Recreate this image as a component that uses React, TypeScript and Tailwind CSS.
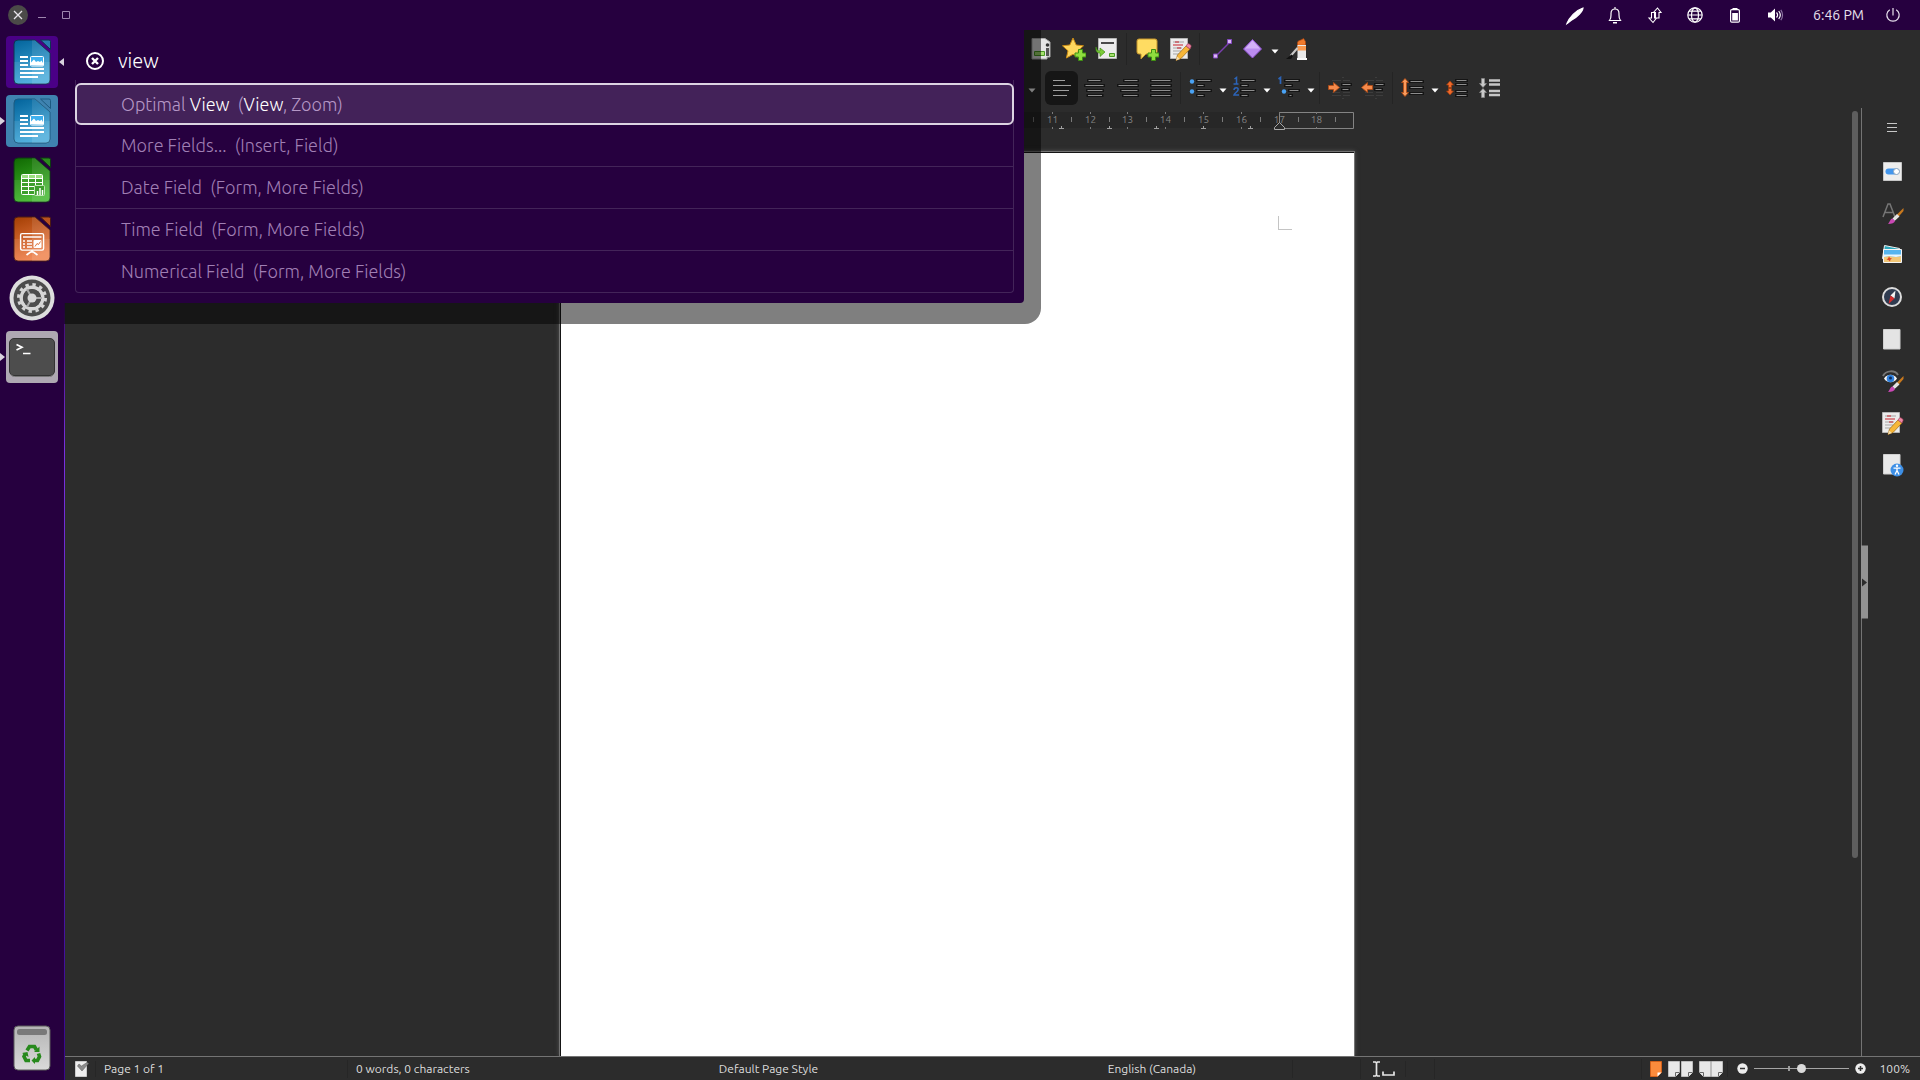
import { useState, type ReactNode } from "react";

type Part = { text: string; hit?: boolean };

const RESULTS: Part[][] = [
  [
    { text: "Optimal " },
    { text: "View", hit: true },
    { text: "  (" },
    { text: "View", hit: true },
    { text: ", Zoom)" },
  ],
  [{ text: "More Fields...  (Insert, Field)" }],
  [{ text: "Date Field  (Form, More Fields)" }],
  [{ text: "Time Field  (Form, More Fields)" }],
  [{ text: "Numerical Field  (Form, More Fields)" }],
];

export default function App() {
  return (
    <div className="flex h-screen flex-col overflow-hidden bg-[#2c2c2c] font-['Ubuntu','Noto_Sans',sans-serif] text-[#dcdcdc]">
      <TopPanel />
      <div className="flex min-h-0 flex-1">
        <Launcher />
        <div className="w-px shrink-0 bg-linear-to-b from-[#26003f] from-20% via-[#7a32e0] via-40% to-[#37078c]" />
        <main className="relative flex min-w-0 flex-1 flex-col">
          <StandardToolbar />
          <FormattingToolbar />
          <div className="flex min-h-0 flex-1">
            <Editor />
            <div className="w-3 shrink-0 pt-[3px]">
              <div className="ml-[3px] h-[79%] w-1.5 rounded-full bg-[#5e5e5e]" />
            </div>
            <Sidebar />
          </div>
          <StatusBar />
          <Hud />
        </main>
      </div>
    </div>
  );
}

/* ---------- top panel ---------- */

function TopPanel() {
  return (
    <header className="flex h-[30px] shrink-0 items-center bg-[#26003f] pl-2 pr-[15px]">
      <button type="button" aria-label="Close" className="flex size-5 items-center justify-center rounded-full bg-[#4b4a48]">
        <svg width="10" height="10" viewBox="0 0 10 10" stroke="#e8e4ea" strokeWidth="1.3">
          <path d="M1 1l8 8M9 1L1 9" />
        </svg>
      </button>
      <button type="button" aria-label="Minimize" className="flex h-5 w-7 items-center justify-center">
        <svg width="10" height="10" viewBox="0 0 10 10" stroke="#9d86ae">
          <path d="M1 7.5h8" />
        </svg>
      </button>
      <button type="button" aria-label="Maximize" className="flex h-5 w-5 items-center justify-center">
        <svg width="10" height="10" viewBox="0 0 10 10" fill="none" stroke="#9d86ae">
          <path d="M1.500 1.500h7v7h-7z" />
        </svg>
      </button>
      <div className="ml-auto flex items-center">
        <Indicator label="Writing">
          <path d="M4 20.500C6 15 13 7 20 5 20 8 14 14.500 8 17.500z" fill="#fff" />
          <path d="M4 20.500l4-4" />
        </Indicator>
        <Indicator label="Notifications">
          <path d="M6.500 17.500C8.500 15 8 13 8 10.500 8 7.500 9.600 6 12 6s4 1.500 4 4.500c0 2.500-.5 4.500 1.500 7zM12 4v2" />
          <path d="M10 19h4v1.500h-4z" fill="#fff" stroke="none" />
        </Indicator>
        <Indicator label="Network">
          <path d="M11.500 9.500H8.500V15H6l4 4.500 3.500-4.500H11.500zM12.500 15h3.500V9.500H18L14.500 5l-4 4.500h2z" strokeWidth="1.100" />
        </Indicator>
        <Indicator label="Keyboard language">
          <circle cx="12" cy="12" r="7.200" />
          <ellipse cx="12" cy="12" rx="3.500" ry="7.200" />
          <path d="M5 12h14M6 8.200h12M6 15.800h12" />
        </Indicator>
        <Indicator label="Battery">
          <path d="M9.500 5h5v2h-5z" fill="#fff" stroke="none" />
          <rect x="7.600" y="6.600" width="8.800" height="12.500" rx="1.200" />
          <path d="M9.200 10h5.700v7.500H9.200z" fill="#fff" stroke="none" />
        </Indicator>
        <Indicator label="Volume">
          <path d="M5 9.500h2.800L12 5.500v13l-4.200-4H5z" fill="#fff" stroke="none" />
          <path d="M13.500 9.500c1.300 1.500 1.300 3.500 0 5M15.700 8c2 2.500 2 5.500 0 8" />
          <path d="M17.800 6.800c2 3 2 7.400 0 10.400" stroke="#8a72a0" />
        </Indicator>
        <time className="ml-[18px] mr-[17px] text-[14px] text-[#e9e2ee]">6:46 PM</time>
        <button type="button" aria-label="Power" className="flex size-6 items-center justify-center">
          <svg width="24" height="24" viewBox="0 0 24 24" fill="none" stroke="#e9e2ee" strokeWidth="1.200">
            <path d="M8.800 6.700a6.200 6.200 0 1 0 6.400 0M12 5v7.500" />
          </svg>
        </button>
      </div>
    </header>
  );
}

function Indicator({ label, children }: { label: string; children: ReactNode }) {
  return (
    <button type="button" aria-label={label} className="flex h-6 w-10 items-center justify-center">
      <svg width="24" height="24" viewBox="0 0 24 24" fill="none" stroke="#fff" strokeWidth="1.200">
        {children}
      </svg>
    </button>
  );
}

/* ---------- launcher ---------- */

function Launcher() {
  return (
    <nav className="flex w-16 shrink-0 flex-col items-center gap-[7px] bg-[#26003f] pb-1.5 pt-1.5">
      <Tile label="LibreOffice Search" className="bg-[#4a0086]">
        <WriterIcon />
        <span className="absolute left-[53px] top-[22px] z-10 border-y-4 border-r-[5px] border-y-transparent border-r-[#d9d2de]" />
      </Tile>
      <Tile label="LibreOffice Writer" className="bg-[#3f83b0]">
        <RunningMark />
        <WriterIcon flat />
      </Tile>
      <Tile label="LibreOffice Calc">
        <CalcIcon />
      </Tile>
      <Tile label="LibreOffice Impress">
        <ImpressIcon />
      </Tile>
      <Tile label="System Settings">
        <GearIcon />
      </Tile>
      <Tile label="Terminal" className="bg-[#aea8b2]">
        <RunningMark />
        <TerminalIcon />
      </Tile>
      <div className="mt-auto">
        <Tile label="Trash">
          <TrashIcon />
        </Tile>
      </div>
    </nav>
  );
}

function Tile({ label, className = "", children }: { label: string; className?: string; children: ReactNode }) {
  return (
    <button type="button" aria-label={label} className={`relative block size-[52px] rounded ${className}`}>
      {children}
    </button>
  );
}

function RunningMark() {
  return (
    <span className="absolute -left-1.5 top-[22px] border-y-4 border-l-[5px] border-y-transparent border-l-[#d9d2de]" />
  );
}

function DocShape({ id, from, to, ear, edge, children }: { id: string; from: string; to: string; ear: string; edge: string; children: ReactNode }) {
  return (
    <svg width="52" height="52" viewBox="0 0 52 52">
      <defs>
        <linearGradient id={id} x1="0" y1="0" x2="0.300" y2="1">
          <stop offset="0" stopColor={from} />
          <stop offset="1" stopColor={to} />
        </linearGradient>
      </defs>
      <path d="M12 4h17L44 17v27a4 4 0 0 1-4 4H12a4 4 0 0 1-4-4V8a4 4 0 0 1 4-4z" fill={`url(#${id})`} stroke={edge} />
      <path d="M26 4h3L44 17v27a4 4 0 0 1-4 4H26z" fill="#fff" opacity="0.100" />
      <path d="M8 26h36v18a4 4 0 0 1-4 4H12a4 4 0 0 1-4-4z" fill="#fff" opacity="0.080" />
      <path d="M34.500 4H43a1.500 1.500 0 0 1 1.500 1.500v8z" fill={ear} stroke={edge} />
      {children}
    </svg>
  );
}

function WriterIcon({ flat = false }: { flat?: boolean }) {
  return (
    <DocShape id={flat ? "writer-b" : "writer-a"} from="#02639b" to="#43a9da" ear={flat ? "#3f83b0" : "#2a7bb0"} edge={flat ? "#1c5a80" : "#0f3350"}>
      <path d="M14 21h8M14 25h8M14 29h8M14 33h24M14 37h24M14 41h18" stroke="#fff" strokeWidth="2" />
      <rect x="24.500" y="20.500" width="13" height="9.500" rx="1" fill="#3fb0ee" stroke="#fff" />
      <path d="M25 29v-2.500l3-3 2 2.500 2-1 2 1 1.500-1.500L37 27v2.500z" fill="#fff" />
    </DocShape>
  );
}

function CalcIcon() {
  return (
    <DocShape id="calc" from="#106802" to="#3fb62a" ear="#2d8a1d" edge="#0c3b12">
      <rect x="15.500" y="20.500" width="21" height="20" rx="1" fill="#3d9f2c" stroke="#fff" />
      <path d="M16 21h20v3H16z" fill="#9bde80" />
      <path d="M15.500 24.500h21M15.500 28.500h21M15.500 32.500h21M15.500 36.500h21M22.500 20v20M29.500 20v20" stroke="#fff" />
      <rect x="28.500" y="31.500" width="10" height="10" rx="1" fill="#3d9f2c" stroke="#bfe6b2" />
      <path d="M31.500 41v-4M34 41v-7M36.500 41v-5" stroke="#fff" strokeWidth="1.500" />
    </DocShape>
  );
}

function ImpressIcon() {
  return (
    <DocShape id="impress" from="#a33e03" to="#ef7f49" ear="#b8521f" edge="#4d1a12">
      <rect x="14.600" y="20.600" width="23" height="16.500" rx="1.500" fill="none" stroke="#fff" strokeWidth="1.400" />
      <path d="M17 24h18.500" stroke="#fff" strokeWidth="1.500" />
      <path d="M17 28h2M21 28h5M17 31h2M21 31h5M17 34h2M21 34h5" stroke="#fff" strokeWidth="1.400" />
      <rect x="27.500" y="27" width="8" height="8" rx="1" fill="#fff" />
      <path d="M29 33.500l2-3 1.500 1 2-3" fill="none" stroke="#e0733c" />
      <path d="M26 37v2M20.500 42l4-3h3l4 3" fill="none" stroke="#fff" strokeWidth="1.700" />
    </DocShape>
  );
}

function GearIcon() {
  return (
    <svg width="52" height="52" viewBox="0 0 52 52">
      <circle cx="26" cy="26" r="22.500" fill="#dedede" />
      <circle cx="26" cy="26" r="18.500" fill="#4c4c4c" />
      <circle cx="26" cy="26" r="13.500" fill="none" stroke="#d6d6d6" strokeWidth="3" strokeDasharray="3.400 3.668" />
      <circle cx="26" cy="26" r="10.800" fill="none" stroke="#d6d6d6" strokeWidth="3.400" />
      <circle cx="26" cy="26" r="6.800" fill="none" stroke="#4c4c4c" strokeWidth="4.600" />
      <path d="M26 26h10M26 26l-5-8.700M26 26l-5 8.700" stroke="#a9a9a9" strokeWidth="2" />
      <circle cx="26" cy="26" r="4.500" fill="#d6d6d6" />
    </svg>
  );
}

function TerminalIcon() {
  return (
    <svg width="52" height="52" viewBox="0 0 52 52">
      <rect x="3.500" y="7.500" width="45" height="37" rx="4.500" fill="#4d4d4d" stroke="#333" />
      <path d="M4.500 43c1 2 2.500 2.500 4 2.500h35c2 0 3.500-1 4-2.500" fill="none" stroke="#777" />
      <path d="M10.500 13.500l5.500 2.800-5.500 2.800" fill="none" stroke="#fff" strokeWidth="1.700" />
      <path d="M17 22.500h7.500" stroke="#fff" strokeWidth="1.500" />
    </svg>
  );
}

function TrashIcon() {
  return (
    <svg width="52" height="52" viewBox="0 0 52 52">
      <defs>
        <linearGradient id="bin" x1="0" y1="0" x2="0" y2="1">
          <stop offset="0" stopColor="#b4b4b4" />
          <stop offset="1" stopColor="#dadada" />
        </linearGradient>
      </defs>
      <rect x="8" y="4" width="36" height="44" rx="4" fill="url(#bin)" stroke="#5b5b5b" />
      <rect x="11" y="7" width="30" height="6" rx="2.500" fill="#797979" />
      <g fill="none" stroke="#27891c" strokeWidth="3.600">
        <path d="M21 28.500l2.500-4h5l2 3.500" />
        <path d="M32.500 31.500l1 3-2 4h-4" />
        <path d="M24 38.500h-4l-2-4 1.500-3" />
      </g>
      <path d="M33.500 24.500v5.500h-5.500zM29 35v7l-3.500-3.500zM16 31l5.500-1 1 5z" fill="#27891c" />
    </svg>
  );
}

/* ---------- HUD ---------- */

function Hud() {
  const [query, setQuery] = useState("view");
  const [active, setActive] = useState(0);

  return (
    <section className="absolute -left-px top-0 rounded-br-2xl bg-black/50 pb-[21px] pr-[17px]">
      <div className="w-[960px] rounded-br bg-[#26003f] pb-2.5 pl-[11px] pr-2.5 pt-[11px]">
        <label className="flex h-[39px] items-center gap-2.5 pl-[11px]">
          <svg width="18" height="18" viewBox="0 0 18 18" fill="none" stroke="#fff">
            <circle cx="9" cy="9" r="8" strokeWidth="2" />
            <path d="M6 6l6 6M12 6l-6 6" strokeWidth="2.400" />
          </svg>
          <span className="sr-only">Search the menus</span>
          <input
            type="text"
            value={query}
            onChange={(e) => setQuery(e.target.value)}
            className="h-9 flex-1 bg-transparent px-1 text-[20px] font-light text-white outline-none"
          />
        </label>
        <ul className="rounded-b border border-t-0 border-[#432459] pt-1">
          {RESULTS.map((parts, i) => (
            <li key={i} className={i > 1 ? "border-t border-[#432459]" : i === 0 ? "-mx-px -mt-px" : ""}>
              <button
                type="button"
                onClick={() => setActive(i)}
                className={
                  i === active
                    ? "block h-[42px] w-full whitespace-pre rounded-md border-2 border-[#dcd3e2] bg-[#432259] pl-11 text-left text-[18px] font-light text-[#b597c6]"
                    : "block h-[41px] w-full whitespace-pre pl-[45px] text-left text-[18px] font-light text-[#a07fb4]"
                }
              >
                {parts.map((p, j) => (
                  <span key={j} className={p.hit ? "text-white" : ""}>
                    {p.text}
                  </span>
                ))}
              </button>
            </li>
          ))}
        </ul>
      </div>
    </section>
  );
}

/* ---------- toolbars ---------- */

function Tool({ label, active = false, children }: { label: string; active?: boolean; children: ReactNode }) {
  return (
    <button
      type="button"
      aria-label={label}
      className={
        active
          ? "flex h-[34px] w-[33px] items-center justify-center rounded-md bg-[#161616]"
          : "flex h-[34px] w-[33px] items-center justify-center"
      }
    >
      <svg width="24" height="24" viewBox="0 0 24 24" fill="none">
        {children}
      </svg>
    </button>
  );
}

function Caret({ label }: { label: string }) {
  return (
    <button type="button" aria-label={label} className="flex h-[34px] w-[11px] items-center justify-center pt-1">
      <svg width="8" height="5" viewBox="0 0 8 5">
        <path d="M0.500 0.500h7L4 4.500z" fill="#fff" />
      </svg>
    </button>
  );
}

function Separator() {
  return <span className="mx-[3px] h-8 w-px bg-[#242424]" />;
}

function Plus() {
  return (
    <path d="M16.500 12.500h4v3.500H24v4h-3.500v3.500h-4V20H13v-4h3.500z" fill="#8fdc3e" stroke="#3f8f12" />
  );
}

function StandardToolbar() {
  return (
    <div className="flex h-[38px] shrink-0 items-center pl-[959px]">
      <Tool label="Header and Footer">
        <path d="M3 1.500h13l5 3.500v15h-3v2H3z" fill="#e6e6e6" stroke="#aaa" />
        <circle cx="18.500" cy="8" r="1.800" fill="#333" />
        <path d="M17 11h3v8h-3z" fill="#555" />
        <path d="M5.500 14.500h10v4h-10z" fill="#a6e070" stroke="#4b9a22" />
      </Tool>
      <Tool label="Insert Bookmark">
        <path d="M11 1l3.200 7 7.300.8-5.500 5 1.600 7.200-6.600-3.700L4.400 21 6 13.800l-5.500-5L7.800 8z" fill="#ffd75e" stroke="#c98a15" />
        <Plus />
      </Tool>
      <Tool label="Insert Cross-reference">
        <path d="M3.500 1.500h18v20h-18z" fill="#ececec" stroke="#b5b5b5" />
        <path d="M6 6h13" stroke="#4a4a4a" strokeWidth="2" />
        <path d="M14.500 16.500h5v3h-5z" fill="#a6e070" stroke="#4b9a22" />
        <path d="M1 10c.5 3 2 4 4 4v-3l5 4-5 4.500V16C2 16 .5 14 1 10z" fill="#7ccb39" stroke="#3f8f12" strokeWidth="0.700" />
      </Tool>
      <Separator />
      <Tool label="Insert Comment">
        <path d="M4 2h16a2 2 0 0 1 2 2v11a2 2 0 0 1-2 2h-9l-5 5v-5H4a2 2 0 0 1-2-2V4a2 2 0 0 1 2-2z" fill="#ffdc62" stroke="#c6952b" />
        <Plus />
      </Tool>
      <Tool label="Track Changes">
        <TrackChanges />
      </Tool>
      <Separator />
      <Tool label="Insert Line">
        <path d="M8 19L22 5" stroke="#7a3fb0" strokeWidth="1.500" />
        <path d="M5.500 17h4v4h-4zM19.500 2.500h4v4h-4z" fill="#dcb8f5" stroke="#8448c0" />
      </Tool>
      <Tool label="Basic Shapes">
        <path d="M11.500 2.500l9 9.500-9 9L2.500 12z" fill="#bb8cf0" stroke="#8f52cf" />
        <path d="M11.500 3.500l7.500 8H4z" fill="#d3b1f8" />
      </Tool>
      <Caret label="More shapes" />
      <Tool label="Show Draw Functions">
        <path d="M12.500 6c0-3 3-2 6-4.500l2 3V8l-8 .500z" fill="#f07a2c" stroke="#b3450d" strokeWidth="0.700" />
        <path d="M12.500 8h8.500v13h-8.500z" fill="#e9e9e9" />
        <path d="M12.500 9h8.500v4.500h-8.500z" fill="#fb9a4f" />
        <path d="M12 21h10v2H12z" fill="#fafafa" />
        <path d="M12.500 11L5.500 19" stroke="#c9c9c9" strokeWidth="2" />
        <path d="M6.500 17.500L1 22h5l2-3z" fill="#111" />
      </Tool>
    </div>
  );
}

function TrackChanges() {
  return (
    <>
      <path d="M2.500 1.500h17v20h-17z" fill="#ececec" stroke="#b5b5b5" />
      <path d="M5 5h11M5 11h9M5 14h8M5 17h7" stroke="#a5a5a5" />
      <path d="M7 5h4M5 8h10M9 11h4" stroke="#c8202a" />
      <path d="M9.500 18L18 9l4 3-9 9.500-5 2z" fill="#f7b739" stroke="#9b6511" strokeWidth="0.700" />
      <path d="M18 9l1.500-2c1-1 4 1 3.500 2.500L22 12z" fill="#f08aa6" stroke="#b04666" strokeWidth="0.700" />
      <path d="M9 19.500l-1 4 4-1.500z" fill="#f3dcae" />
    </>
  );
}

// grey text rule with the dark outline of the dark icon theme
function Rules({ d }: { d: string }) {
  return (
    <>
      <path d={d} stroke="#151515" strokeWidth="3" strokeLinecap="square" />
      <path d={d} stroke="#8d8d8d" />
    </>
  );
}

function FormattingToolbar() {
  return (
    <div className="flex h-10 shrink-0 items-center pl-[961px]">
      <span className="mr-2 flex">
        <Caret label="Highlight color" />
      </span>
      <Tool label="Align Left" active>
        <path d="M3 4.500h12M3 9.500h18M3 14.500h16M3 19.500h14" stroke="#a0a0a0" />
      </Tool>
      <Tool label="Center">
        <Rules d="M5.500 4.500h12M2.500 9.500h18M4.500 14.500h15M5 19.500h14" />
      </Tool>
      <Tool label="Align Right">
        <Rules d="M8.500 4.500h13M2.500 9.500h19M5.500 14.500h16M7.500 19.500h14" />
      </Tool>
      <Tool label="Justify">
        <Rules d="M2.500 4.500h19M2.500 9.500h19M2.500 14.500h19M2.500 19.500h19" />
      </Tool>
      <Separator />
      <Tool label="Bullets">
        <circle cx="3" cy="5.500" r="2.200" fill="#4aa3f5" />
        <circle cx="3" cy="15.500" r="2.200" fill="#4aa3f5" />
        <Rules d="M8.500 4.500h13M8.500 9.500h6M8.500 14.500h13M8.500 19.500h6" />
      </Tool>
      <Caret label="Bullet styles" />
      <Tool label="Numbering">
        <path d="M1.500 3l2-1.500V8M0.500 8h5" stroke="#2c64b8" strokeWidth="1.500" />
        <path d="M1 14c0-3 5-3 4 0-.500 2-3.500 3-4 5h5" stroke="#2c64b8" strokeWidth="1.500" />
        <Rules d="M8.500 4.500h13M8.500 9.500h6M8.500 14.500h13M8.500 19.500h6" />
      </Tool>
      <Caret label="Numbering styles" />
      <Tool label="Outline">
        <path d="M1.500 3l2-1.500V8" stroke="#2c64b8" strokeWidth="1.700" />
        <circle cx="7" cy="15.500" r="2.200" fill="#4aa3f5" />
        <Rules d="M8.500 4.500h13M8.500 9.500h6M12.500 14.500h9M12.500 19.500h2" />
      </Tool>
      <Caret label="Outline styles" />
      <Separator />
      <Tool label="Increase Indent">
        <path d="M4 4.500h9M15 4.500h7M4 19.500h9M15 19.500h7M14 1.500h2M14 22.500h2M4 16.500h8M15 16.500h7" stroke="#3d3d3d" />
        <Rules d="M14.500 8.500h8M14.500 13.500h6" />
        <path d="M0.500 9.500h5V6.500l6 5-6 5V13.500h-5z" fill="#f58a4b" stroke="#b34a12" strokeWidth="0.800" />
      </Tool>
      <Tool label="Decrease Indent">
        <path d="M4 4.500h9M15 4.500h7M4 19.500h9M15 19.500h7M14 1.500h2M14 22.500h2M4 16.500h8M15 16.500h7" stroke="#3d3d3d" />
        <Rules d="M14.500 8.500h8M14.500 13.500h6" />
        <path d="M11.500 9.500h-5V6.500l-6 5 6 5V13.500h5z" fill="#f58a4b" stroke="#b34a12" strokeWidth="0.800" />
      </Tool>
      <Separator />
      <Tool label="Line Spacing">
        <Rules d="M9.500 5.500h12M9.500 11.500h12M9.500 17.500h12" />
        <path d="M4 2.500l3.500 4h-2v10h2L4 20.500l-3.500-4h2v-10h-2z" fill="#f99b5c" stroke="#b34a12" strokeWidth="0.800" />
      </Tool>
      <Caret label="Line spacing options" />
      <Tool label="Increase Paragraph Spacing">
        <Rules d="M11.500 4.500h10M11.500 8.500h10M11.500 15.500h10M11.500 19.500h10" />
        <path d="M5 5l3.500 4h-2v2.500h-3V9h-2zM5 19l3.500-4h-2v-2.500h-3V15h-2z" fill="#f06a2c" stroke="#a33e0c" strokeWidth="0.700" />
      </Tool>
      <Tool label="Decrease Paragraph Spacing">
        <path d="M11 4.500h11M11 8.500h11M11 15h11M11 19h11" stroke="#c6c6c6" strokeWidth="2.500" />
        <path d="M5 11.500l3.500-4h-2V2.500h-3v5h-2zM5 12.500l3.500 4h-2v5h-3v-5h-2z" fill="#c9c9c9" stroke="#8e8e8e" strokeWidth="0.600" />
      </Tool>
    </div>
  );
}

/* ---------- document ---------- */

const CM = Array.from({ length: 18 }, (_, i) => i + 1);
const TAB_STOPS = [313, 360, 407, 454, 501, 549, 596, 643, 690];

function Ruler() {
  return (
    <svg width="795" height="18" viewBox="0 0 795 18" className="mt-1 shrink-0" fontSize="10" textAnchor="middle">
      <path d="M76 0h643v16H76z" fill="#272727" />
      <path d="M719.500 0.500h74v16h-74z" fill="none" stroke="#848484" />
      {CM.map((n) => {
        const x = Math.round(76 + n * 37.8) + 0.5;
        return (
          <g key={n}>
            <path d={`M${x} 0v2M${x} 15v2M${x + 19} 5v5`} stroke="#7a7a7a" />
            <text x={x} y="11" fill="#858585">
              {n}
            </text>
          </g>
        );
      })}
      {TAB_STOPS.map((x) => (
        <path key={x} d={`M${x + 0.5} 14v3M${x - 2} 16.500h5`} stroke="#a0a0a0" />
      ))}
      <path d="M719.500 10.500l5 5v2h-10v-2z" fill="#2c2c2c" stroke="#a9a9a9" />
    </svg>
  );
}

function Editor() {
  return (
    <div className="flex min-w-0 flex-1 flex-col items-center overflow-hidden">
      <Ruler />
      <div className="mt-[21px] flex w-[796px] flex-1 justify-end border border-b-0 border-[#747474] bg-white pr-[62px] pt-[64px] shadow-[inset_1px_1px_#151515,0_0_4px_#555]">
        <span className="size-3.5 border-b border-l border-[#c4c4c4]" />
      </div>
    </div>
  );
}

/* ---------- sidebar ---------- */

function SideTab({ label, children }: { label: string; children: ReactNode }) {
  return (
    <button type="button" aria-label={label} className="flex h-[42px] w-full items-center justify-center">
      <svg width="24" height="24" viewBox="0 0 24 24" fill="none">
        {children}
      </svg>
    </button>
  );
}

function Brush() {
  return (
    <>
      <path d="M23.500 7l-9 9 2 2 7-8z" fill="#c9791e" />
      <path d="M17 13l-4.500 4.500 2 2.500 5-4.500z" fill="#e4e4e4" />
      <path d="M12.500 17.500C10 18 10 21 8 23c4 0 6.500-1 7-3z" fill="#c948b4" />
    </>
  );
}

function Sidebar() {
  return (
    <aside className="relative flex w-[59px] shrink-0 flex-col border-l border-[#747474] pl-px">
      <button type="button" aria-label="Sidebar Settings" className="mb-0.5 flex h-10 items-center justify-center">
        <svg width="10" height="10" viewBox="0 0 10 10" stroke="#c8c8c8">
          <path d="M0 0.500h10M0 4.500h10M0 8.500h10" />
        </svg>
      </button>
      <SideTab label="Properties">
        <path d="M3.500 3.500h18v18h-18z" fill="#ededed" stroke="#c7c7c7" />
        <rect x="5.500" y="9.500" width="14" height="6" rx="3" fill="#4396ec" />
        <circle cx="16.500" cy="12.500" r="3" fill="#fff" stroke="#8fa6bd" />
      </SideTab>
      <SideTab label="Styles">
        <path d="M3 16L8 3h2l5 13M5 11.500h8" stroke="#757575" strokeWidth="1.500" />
        <Brush />
      </SideTab>
      <SideTab label="Gallery">
        <path d="M4.500 2.500l15 3v12l-17-2z" fill="#2aa7bd" stroke="#eee" />
        <path d="M3.500 6.500h18v13h-18z" fill="#57b5ef" stroke="#f5f5f5" />
        <path d="M4 14l5-1 7 1 5-1v6H4z" fill="#f2c777" />
        <path d="M4 11.500h17v1.500l-5 1-7-1-5 1z" fill="#e8f6ff" />
        <path d="M9 13.500l1 1.500 2 .500-1.500 1-.500 2-1.500-1.500-2-.500 1.500-1z" fill="#dd4322" />
      </SideTab>
      <SideTab label="Navigator">
        <circle cx="12" cy="12" r="9" fill="#2f3b50" stroke="#dcdcdc" strokeWidth="2" />
        <path d="M15.500 5.500l-1 8-4-3z" fill="#f3f3f3" />
        <path d="M8.500 19l2-8.500 4 3z" fill="#d52b2b" />
      </SideTab>
      <SideTab label="Page">
        <path d="M3.500 2.500h16.500v19.500h-16.500z" fill="#e4e4e4" stroke="#d0d0d0" />
      </SideTab>
      <SideTab label="Style Inspector">
        <path d="M3 7c3-6 12-6 15-1" stroke="#777" strokeWidth="2" />
        <path d="M4 9.500c3-5 10-5 13 0-3 5-10 5-13 0z" fill="#f3f3f3" />
        <circle cx="10.500" cy="9.500" r="3.800" fill="#2f7fdd" />
        <circle cx="10.500" cy="9" r="1.500" fill="#0b2d5c" />
        <Brush />
      </SideTab>
      <SideTab label="Manage Changes">
        <TrackChanges />
      </SideTab>
      <SideTab label="Accessibility Check">
        <path d="M3.500 1.500h16.500v19.500h-16.500z" fill="#e9e9e9" stroke="#d0d0d0" />
        <circle cx="17" cy="17" r="6.500" fill="#3d8fe6" />
        <circle cx="17" cy="12.800" r="1.200" fill="#fff" />
        <path d="M13.500 15.200h7M17 15v3.500M17 17.500l-2 4M17 17.500l2 4" stroke="#fff" strokeWidth="1.300" />
      </SideTab>
      <button type="button" aria-label="Hide sidebar" className="absolute -left-px top-1/2 flex h-[73px] w-[7px] -translate-y-1/2 items-center bg-[#929292] pl-px">
        <span className="border-y-[4px] border-l-[5px] border-y-transparent border-l-[#2c2c2c]" />
      </button>
    </aside>
  );
}

/* ---------- status bar ---------- */

function StatusBar() {
  const [zoom, setZoom] = useState(50);

  return (
    <footer className="flex h-6 shrink-0 items-center border-t border-[#747474] text-[12px]">
      <span className="flex w-[31px] justify-end border-r border-[#262626] pr-1.5">
        <svg width="14" height="16" viewBox="0 0 14 16">
          <path d="M0.500 0.500h11v15H0.500z" fill="#eee" stroke="#c9c9c9" />
          <path d="M2.500 5l1.500-2 2.500 2L12 1.500l1.500 1L7 10z" fill="#8a8a8a" stroke="#666" strokeWidth="0.600" />
        </svg>
      </span>
      <span className="w-[252px] border-r border-[#262626] pl-2">Page 1 of 1</span>
      <span className="w-[252px] pl-2">0 words, 0 characters</span>
      <span className="flex-1 text-center">
        <span className="pr-[66px]">Default Page Style</span>
      </span>
      <span className="w-[290px] border-r border-[#262626] pr-[96px] text-right">English (Canada)</span>
      <span className="h-5 w-[68px] border-r border-[#262626]" />
      <span className="flex w-[45px] justify-center border-r border-[#262626]">
        <svg width="24" height="16" viewBox="0 0 24 16" fill="none" stroke="#e6e6e6">
          <path d="M2 1h2.500l1 1 1-1H9M5.500 2v12M2 15h2.500l1-1 1 1H9" strokeWidth="1.700" />
          <path d="M12 10.500V14h11v-3.500" strokeWidth="1.700" />
        </svg>
      </span>
      <span className="h-5 w-[29px] border-r border-[#262626]" />
      <span className="h-5 w-[207px] border-r border-[#262626]" />
      <div className="flex w-[86px] items-center gap-1.5 border-r border-[#262626] pl-2">
        <button type="button" aria-label="Single-page view">
          <svg width="12" height="16" viewBox="0 0 12 16">
            <path d="M0.500 0.500h11v11l-4 4h-7z" fill="#fb8b3c" stroke="#d2601a" />
            <path d="M7.500 15.500v-4h4z" fill="#fff" />
          </svg>
        </button>
        <button type="button" aria-label="Multiple-page view">
          <svg width="25" height="16" viewBox="0 0 25 16" fill="#e8e8e8" stroke="#bdbdbd">
            <path d="M0.500 0.500h11v11l-4 4h-7zM13.500 0.500h11v11l-4 4h-7z" />
            <path d="M7.500 15.500v-4h4M20.500 15.500v-4h4" stroke="#666" />
          </svg>
        </button>
        <button type="button" aria-label="Book view">
          <svg width="24" height="16" viewBox="0 0 24 16" fill="#e8e8e8" stroke="#bdbdbd">
            <path d="M0.500 0.500h11v15h-7l-4-4zM12.500 0.500h11v11l-4 4h-7z" />
            <path d="M4.500 15.500v-4h-4M19.500 15.500v-4h4" stroke="#666" />
          </svg>
        </button>
      </div>
      <div className="flex items-center gap-1.5 pl-[9px]">
        <ZoomButton label="Zoom out" d="M3 5.500h5" />
        <span className="relative flex items-center">
          <span className="absolute left-[34px] h-[5px] w-0.5 bg-[#9a9a9a]" />
          <input
            type="range"
            aria-label="Zoom"
            value={zoom}
            onChange={(e) => setZoom(Number(e.target.value))}
            className="relative h-4 w-[95px] appearance-none bg-transparent [&::-webkit-slider-runnable-track]:h-px [&::-webkit-slider-runnable-track]:bg-[#a5a5a5] [&::-webkit-slider-thumb]:-mt-1 [&::-webkit-slider-thumb]:size-[9px] [&::-webkit-slider-thumb]:appearance-none [&::-webkit-slider-thumb]:rounded-full [&::-webkit-slider-thumb]:bg-[#dadada]"
          />
        </span>
        <ZoomButton label="Zoom in" d="M3 5.500h5M5.500 3v5" />
      </div>
      <span className="w-[54px] pr-2.5 text-right">100%</span>
    </footer>
  );
}

function ZoomButton({ label, d }: { label: string; d: string }) {
  return (
    <button type="button" aria-label={label}>
      <svg width="11" height="11" viewBox="0 0 11 11">
        <circle cx="5.500" cy="5.500" r="5.200" fill="#ededed" />
        <path d={d} stroke="#333" strokeWidth="1.500" />
      </svg>
    </button>
  );
}
